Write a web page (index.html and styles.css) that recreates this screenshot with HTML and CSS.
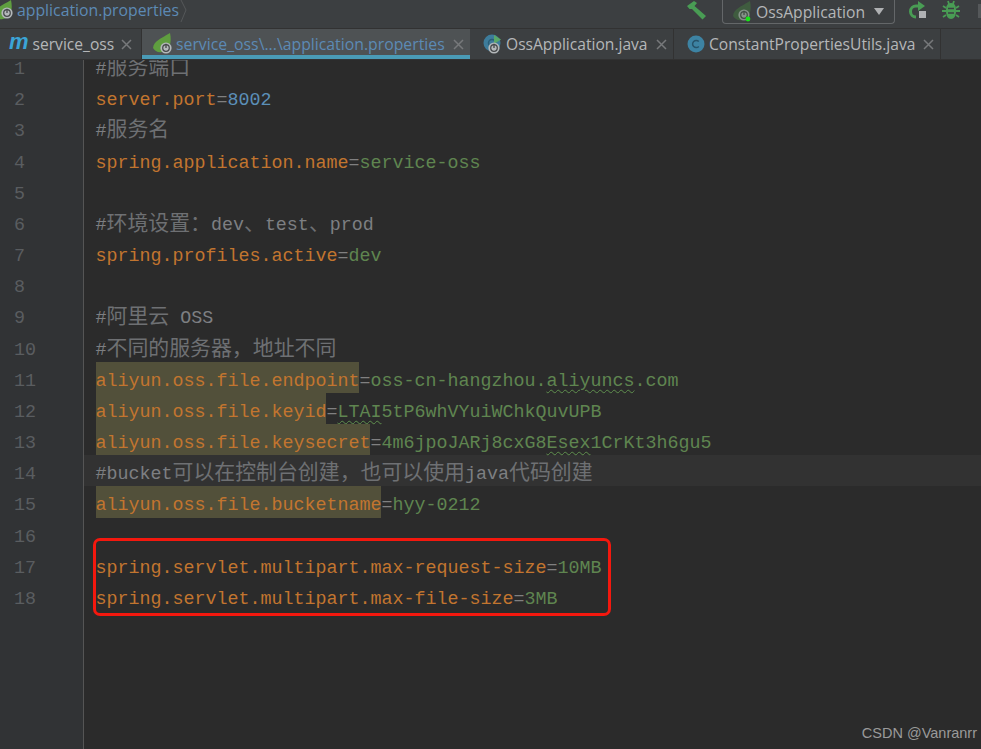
FILE: index.html
```html
<!DOCTYPE html>
<html lang="zh">
<head>
<meta charset="utf-8">
<title>application.properties</title>
<link rel="stylesheet" href="styles.css">
</head>
<body>
<svg class="defs" width="0" height="0" aria-hidden="true">
  <defs>
    <g id="power">
      <circle cx="0" cy="0" r="5.600" fill="#b4b8ba"/>
      <circle cx="0" cy="0" r="3.300" fill="none" stroke="#45484a" stroke-width="1.200"/>
      <path d="M0-4.200V0" stroke="#45484a" stroke-width="1.300"/>
    </g>
    <path id="leaf" d="M0 15C1 8 7 6 17 0C19 9 17 18 9 19C5 20 2 18 0 15Z"/>
    <g id="x"><path d="M1 1L10 10M10 1L1 10" stroke="#77797b" stroke-width="1.500" fill="none"/></g>
  </defs>
</svg>
<div class="app">
  <header class="navbar">
    <div class="crumb">
      <svg class="ico-crumb" width="16" height="24" viewBox="0 0 16 24"><use href="#leaf" x="-6" y="0" fill="#5f9e3f"/><use href="#power" x="7" y="13"/></svg>
      <span class="crumb-text">application.properties</span>
      <svg class="crumb-sep" width="8" height="24" viewBox="0 0 8 24"><path d="M1 0L6 10L1 22" fill="none" stroke="#55585a"/></svg>
    </div>
    <div class="tools">
      <svg class="ico-hammer" width="20" height="20" viewBox="0 0 20 20"><path d="M0 5L7 0L10 2L7.500 5L19 15L15.500 18.500L5 8L2.500 8Z" fill="#499c54"/></svg>
      <div class="runconf">
        <svg width="22" height="22" viewBox="0 0 22 22"><use href="#leaf" x="1" y="0" fill="#3f5c3f"/><use href="#power" x="12" y="14" opacity=".6"/><circle cx="16" cy="18" r="2.400" fill="#16e816"/></svg>
        <span class="runconf-name">OssApplication</span>
        <span class="caret"></span>
      </div>
      <svg class="ico-rerun" width="20" height="20" viewBox="0 0 20 20"><path d="M10 5H7A5.500 5.500 0 0 0 7 16" fill="none" stroke="#499c54" stroke-width="3"/><path d="M9 0L16 5L9 10Z" fill="#499c54"/><rect x="10" y="10" width="7" height="7" fill="#afb1b3"/></svg>
      <svg class="ico-bug" width="18" height="20" viewBox="0 0 18 20"><g fill="none" stroke="#499c54" stroke-width="1.800"><path d="M1 6L4 8M17 6L14 8M0 11H4M18 11H14M1 17L4 15M17 17L14 15M6 1L7 4M12 1L11 4"/></g><path d="M9 3C13 3 14 6 14 11C14 16 12 19 9 19C6 19 4 16 4 11C4 6 5 3 9 3Z" fill="#499c54"/><path d="M6 8.500H12M6 13H12" stroke="#3c3f41" stroke-width="1.500"/></svg>
      <span class="stub"></span>
    </div>
  </header>

  <nav class="tabs">
    <div class="tab tab-m">
      <span class="m-icon">m</span>
      <span class="tab-label">service_oss</span>
      <svg class="close" width="11" height="11" viewBox="0 0 11 11"><use href="#x"/></svg>
    </div>
    <div class="tab tab-active">
      <svg width="20" height="22" viewBox="0 0 20 22"><use href="#leaf" x="0" y="0" fill="#5f9e3f"/><use href="#power" x="13" y="15"/></svg>
      <span class="tab-label">service_oss\...\application.properties</span>
      <svg class="close" width="11" height="11" viewBox="0 0 11 11"><use href="#x"/></svg>
    </div>
    <div class="tab tab-oss">
      <svg width="20" height="22" viewBox="0 0 20 22"><circle cx="9" cy="10" r="8.500" fill="#3d7c9b"/><circle cx="9" cy="10" r="3.500" fill="none" stroke="#2a5e78" stroke-width="1.500"/><path d="M11 2L18 6.500L11 11Z" fill="#59a869"/><use href="#power" x="11" y="15"/></svg>
      <span class="tab-label">OssApplication.java</span>
      <svg class="close" width="11" height="11" viewBox="0 0 11 11"><use href="#x"/></svg>
    </div>
    <div class="tab tab-const">
      <svg width="18" height="18" viewBox="0 0 18 18"><circle cx="9" cy="9" r="8.500" fill="#3d83a3"/><path d="M11.800 6.500A3.600 3.600 0 1 0 11.800 11.500" fill="none" stroke="#26536a" stroke-width="1.500"/></svg>
      <span class="tab-label">ConstantPropertiesUtils.java</span>
      <svg class="close" width="11" height="11" viewBox="0 0 11 11"><use href="#x"/></svg>
    </div>
  </nav>

  <main class="editor">
    <div class="lines">
      <div class="line"><span class="num">1</span><span class="code c">#<span class="zh">服务端口</span></span></div>
      <div class="line"><span class="num">2</span><span class="code"><span class="k">server.port</span><span class="e">=</span><span class="n">8002</span></span></div>
      <div class="line"><span class="num">3</span><span class="code c">#<span class="zh">服务名</span></span></div>
      <div class="line"><span class="num">4</span><span class="code"><span class="k">spring.application.name</span><span class="e">=</span><span class="v">service-oss</span></span></div>
      <div class="line"><span class="num">5</span><span class="code"></span></div>
      <div class="line"><span class="num">6</span><span class="code c">#<span class="zh">环境设置：</span>dev<span class="zh">、</span>test<span class="zh">、</span>prod</span></div>
      <div class="line"><span class="num">7</span><span class="code"><span class="k">spring.profiles.active</span><span class="e">=</span><span class="v">dev</span></span></div>
      <div class="line"><span class="num">8</span><span class="code"></span></div>
      <div class="line"><span class="num">9</span><span class="code c">#<span class="zh">阿里云</span> OSS</span></div>
      <div class="line"><span class="num">10</span><span class="code c">#<span class="zh">不同的服务器，地址不同</span></span></div>
      <div class="line"><span class="num">11</span><span class="code"><span class="k hl">aliyun.oss.file.endpoint</span><span class="e">=</span><span class="v">oss-cn-hangzhou.<span class="typo">aliyuncs</span>.com</span></span></div>
      <div class="line"><span class="num">12</span><span class="code"><span class="k hl">aliyun.oss.file.keyid</span><span class="e">=</span><span class="v"><span class="typo">LTAI</span>5tP6whVYuiWChkQuvUPB</span></span></div>
      <div class="line"><span class="num">13</span><span class="code"><span class="k hl">aliyun.oss.file.keysecret</span><span class="e">=</span><span class="v">4m6jpoJARj8cxG8<span class="typo">Esex</span>1CrKt3h6gu5</span></span></div>
      <div class="line line-current"><span class="num">14</span><span class="code c">#bucket<span class="zh">可以在控制台创建，也可以使用</span>java<span class="zh">代码创建</span></span></div>
      <div class="line"><span class="num">15</span><span class="code"><span class="k hl">aliyun.oss.file.bucketname</span><span class="e">=</span><span class="v">hyy-0212</span></span></div>
      <div class="line"><span class="num">16</span><span class="code"></span></div>
      <div class="line"><span class="num">17</span><span class="code"><span class="k">spring.servlet.multipart.max-request-size</span><span class="e">=</span><span class="v">10MB</span></span></div>
      <div class="line"><span class="num">18</span><span class="code"><span class="k">spring.servlet.multipart.max-file-size</span><span class="e">=</span><span class="v">3MB</span></span></div>
    </div>
    <div class="redbox"></div>
    <div class="watermark">CSDN @Vanranrr</div>
  </main>
</div>
</body>
</html>
```

FILE: styles.css
```css
* { box-sizing: border-box; }
html, body { margin: 0; height: 100%; background: #2b2b2b; }
.defs { position: absolute; }
.app {
  width: 981px;
  height: 749px;
  display: flex;
  flex-direction: column;
  overflow: hidden;
  font-family: "Open Sans", "Liberation Sans", sans-serif;
}
.navbar {
  flex: 0 0 28px;
  height: 28px;
  background: #3c3f41;
  display: flex;
  justify-content: space-between;
  color: #bbb;
}
.crumb { display: flex; align-items: flex-start; height: 24px; }
.ico-crumb { flex: none; margin-right: 1px; }
.crumb-text {
  font-size: 15.800px;
  line-height: 20px;
  color: #5c8ab5;
}
.crumb-sep { margin-left: 1px; }
.tools { display: flex; align-items: flex-start; }
.ico-hammer { margin: 1px 15px 0 0; }
.runconf {
  width: 173px;
  height: 24px;
  border: 1px solid #646769;
  border-top: 0;
  border-radius: 0 0 4px 4px;
  display: flex;
  align-items: center;
  padding: 0 0 0 9px;
}
.runconf-name {
  font-size: 15.700px;
  margin-left: 2px;
  color: #b4b6b8;
}
.caret {
  margin-left: 9px;
  width: 0;
  height: 0;
  border-left: 5.500px solid transparent;
  border-right: 5.500px solid transparent;
  border-top: 7px solid #afb1b3;
}
.ico-rerun { margin: 1px 0 0 14px; }
.ico-bug { margin: 0 0 0 13px; }
.stub {
  width: 3px;
  height: 14px;
  margin: 4px 0 0 18px;
  background: #55585a;
}
.tabs {
  flex: 0 0 32px;
  height: 32px;
  display: flex;
  background: #3c3f41;
  border-top: 1px solid #323232;
  border-bottom: 1px solid #323232;
}
.tab {
  display: flex;
  align-items: center;
  height: 30px;
  font-size: 15.600px;
  color: #b5b7b9;
  border-right: 1px solid #323232;
}
.tab svg { flex: none; }
.tab-m { width: 142px; padding-left: 9px; }
.tab-m .close { margin-left: 7px; }
.m-icon {
  font-family: "Liberation Sans", sans-serif;
  font-style: italic;
  font-weight: 700;
  font-size: 22px;
  line-height: 22px;
  margin: -4px 4px 0 0;
  color: #3ba4d6;
}
.tab-active {
  width: 328px;
  padding-left: 11px;
  background: #4e5254;
  color: #5c8ab5;
  font-size: 15.800px;
  border-right: 0;
  box-shadow: inset 0 -4px 0 #4a9bb6;
}
.tab-active .tab-label { margin-left: 3px; }
.tab-oss { width: 204px; padding-left: 13px; }
.tab-oss .tab-label { margin-left: 3px; }
.tab-const { width: 267px; padding-left: 13px; }
.tab-const .tab-label { margin-left: 4px; }
.close { margin-left: 8px; }
.editor {
  position: relative;
  flex: 1;
  overflow: hidden;
  background: #2b2b2b;
}
.lines {
  margin-top: -10px;
  background: linear-gradient(to right, #313335 83px, #555 83px, #555 84px, transparent 84px);
  min-height: 700px;
}
.line {
  display: flex;
  height: 31.180px;
  line-height: 31.180px;
}
.line-current { background: #323232; }
.num {
  flex: 0 0 84px;
  width: 84px;
  padding: 4px 0 0 14px;
  font-family: "Liberation Mono", monospace;
  font-size: 18.330px;
  color: #5a5d60;
  background: linear-gradient(to right, #313335 83px, #555 83px);
}
.code {
  padding: 4px 0 0 11.500px;
  white-space: pre;
  font-family: "Liberation Mono", "Noto Sans CJK SC", monospace;
  font-size: 18.330px;
}
.zh {
  font-family: "Noto Sans CJK SC", sans-serif;
  font-size: 20.900px;
  line-height: 1;
  color: #6e7073;
}
.k { color: #c2752f; }
.e { color: #808080; }
.v { color: #5f8550; }
.n { color: #5b8fb8; }
.c { color: #7d7f82; }
.hl { background: #52503a; padding: 9.200px 0 1.200px; }
.typo { text-decoration: underline wavy #5f8f4e 1px; text-underline-offset: 3px; }
.redbox {
  position: absolute;
  left: 93px;
  top: 478px;
  width: 518px;
  height: 78px;
  border: 3px solid #f4180e;
  border-radius: 7px;
}
.watermark {
  position: absolute;
  right: 4px;
  bottom: 8px;
  font-family: "Liberation Sans", sans-serif;
  font-size: 14.500px;
  line-height: 16px;
  color: #9a9a9a;
}
```
